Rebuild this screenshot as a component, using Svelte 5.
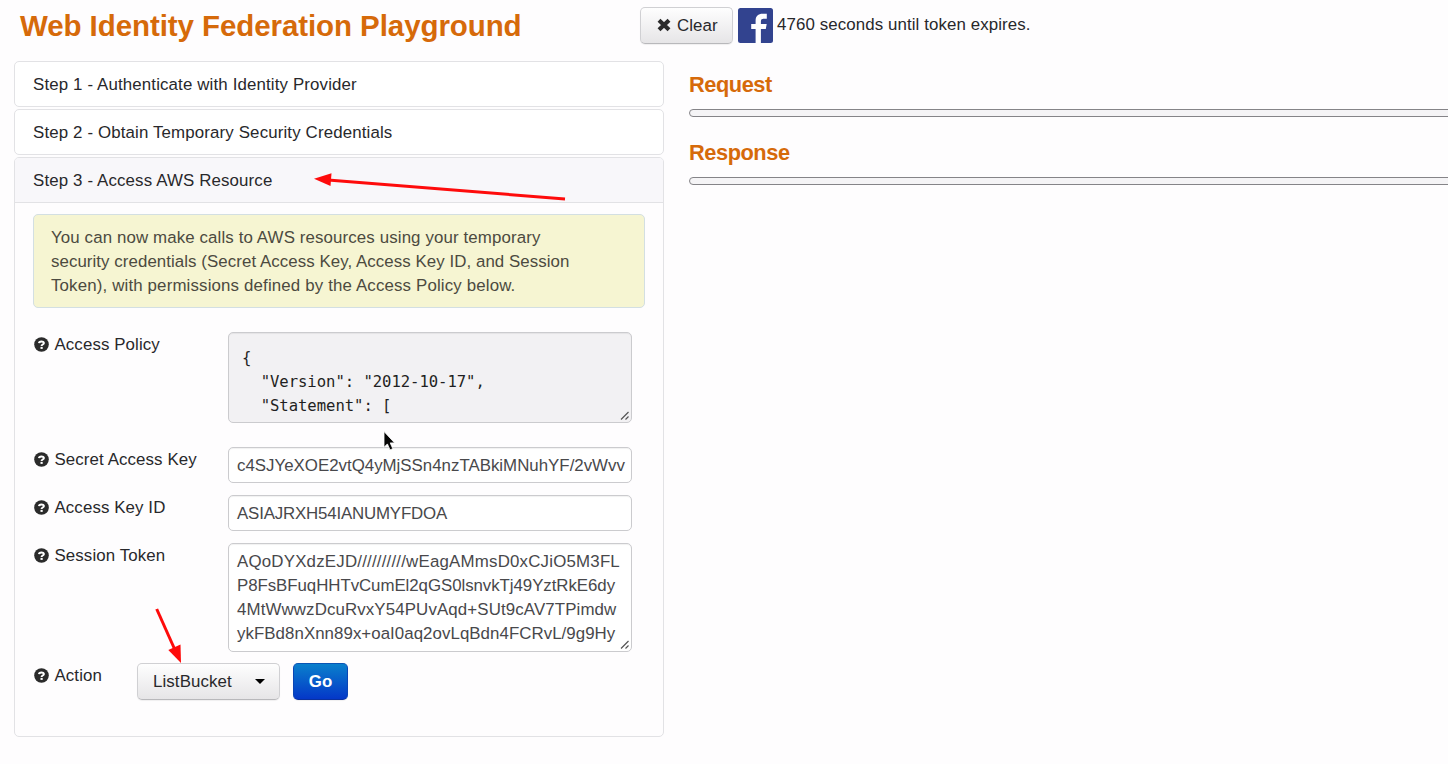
<script>
  const steps = [
    'Step 1 - Authenticate with Identity Provider',
    'Step 2 - Obtain Temporary Security Credentials'
  ];
  const notice = [
    { text: 'You can now make calls to AWS resources using your temporary', track: 0.12 },
    { text: 'security credentials (Secret Access Key, Access Key ID, and Session', track: 0.065 },
    { text: 'Token), with permissions defined by the Access Policy below.', track: 0.15 }
  ];
  const policy = '{\n  "Version": "2012-10-17",\n  "Statement": [';
  const token = [
    { text: 'AQoDYXdzEJD//////////wEagAMmsD0xCJiO5M3FL', track: 0.2 },
    { text: 'P8FsBFuqHHTvCumEl2qGS0lsnvkTj49YztRkE6dy', track: -0.06 },
    { text: '4MtWwwzDcuRvxY54PUvAqd+SUt9cAV7TPimdw', track: 0.12 },
    { text: 'ykFBd8nXnn89x+oaI0aq2ovLqBdn4FCRvL/9g9Hy', track: 0.05 }
  ];
</script>

{#snippet label(text)}
  <div class="label">
    <svg width="15" height="15" viewBox="0 0 15 15">
      <circle cx="7.5" cy="7.5" r="7.3" fill="#2b2b2b" />
      <path d="M5 6.1C5.1 3.9 9.9 3.8 9.9 6.1C9.9 7.6 7.6 7.4 7.6 8.9" fill="none" stroke="#fff" stroke-width="2" />
      <rect x="6.5" y="9.9" width="2.2" height="2" fill="#fff" />
    </svg>
    <span>{text}</span>
  </div>
{/snippet}

{#snippet lines(items)}
  {#each items as line}
    <div class="line" style="letter-spacing: {line.track}px">{line.text}</div>
  {/each}
{/snippet}

{#snippet grip()}
  <svg class="grip" width="10" height="10" viewBox="0 0 10 10">
    <path d="M1 8.5L8.5 1M5.5 8.5L8.5 5.5" stroke="#555" stroke-width="1.2" fill="none" />
  </svg>
{/snippet}

<div class="page">
  <header>
    <h1>Web Identity Federation Playground</h1>
    <button class="btn clear">
      <svg width="14" height="14" viewBox="0 0 14 14">
        <path d="M2 2.2L12 11.8M12 2.2L2 11.8" stroke="#2b2b2b" stroke-width="4.1" />
      </svg>
      <span>Clear</span>
    </button>
    <svg class="fb" width="35" height="35" viewBox="0 0 35 35">
      <rect width="35" height="35" rx="2.5" fill="#32438f" />
      <path d="M17.6 35V21.1H13.2V16H17.6V12.4C17.6 8 20.2 5.7 24.7 5.7H28.8V10.8H26C23.7 10.8 22.9 11.5 22.9 13.4V16H28.7L27.8 21.1H22.9V35Z" fill="#fff" />
    </svg>
    <span class="expiry">4760 seconds until token expires.</span>
  </header>

  <main>
    <section class="steps">
      {#each steps as step}
        <div class="group"><div class="heading">{step}</div></div>
      {/each}
      <div class="group open">
        <div class="heading">Step 3 - Access AWS Resource</div>
        <div class="body">
          <div class="alert">{@render lines(notice)}</div>
          <div class="row policy">
            {@render label('Access Policy')}
            <div class="field code">{policy}{@render grip()}</div>
          </div>
          <div class="row">
            {@render label('Secret Access Key')}
            <div class="field secret">c4SJYeXOE2vtQ4yMjSSn4nzTABkiMNuhYF/2vWvv</div>
          </div>
          <div class="row">
            {@render label('Access Key ID')}
            <div class="field key">ASIAJRXH54IANUMYFDOA</div>
          </div>
          <div class="row token">
            {@render label('Session Token')}
            <div class="field area">{@render lines(token)}{@render grip()}</div>
          </div>
          <div class="row action">
            {@render label('Action')}
            <button class="btn select">
              <span>ListBucket</span>
              <svg width="10" height="5" viewBox="0 0 10 5"><path d="M0 0H10L5 5Z" fill="#000" /></svg>
            </button>
            <button class="btn go"><span>Go</span></button>
          </div>
        </div>
      </div>
    </section>

    <section class="output">
      <h2>Request</h2>
      <div class="bar"></div>
      <h2>Response</h2>
      <div class="bar"></div>
    </section>
  </main>

  <svg class="overlay" width="1448" height="764" viewBox="0 0 1448 764">
    <g fill="#fe0b0b" stroke="#fe0b0b">
      <path d="M328 180L565 199" stroke-width="3" />
      <path d="M314 178.7L331.5 173.3L330.5 186Z" stroke="none" />
      <path d="M156.7 609L175 650" stroke-width="3" />
      <path d="M181 663L168.3 650L180.5 644.6Z" stroke="none" />
    </g>
    <path d="M384 431.5V447.3L387.4 443.9L390 449.9L392.8 448.7L390.2 442.9H394.6Z" fill="#050505" stroke="#fff" stroke-width=".8" />
  </svg>
</div>

<style>
  :global(body) { margin: 0; overflow: hidden; background: #fefdfe; }
  .page {
    position: relative;
    width: 1448px;
    height: 764px;
    overflow: hidden;
    box-sizing: border-box;
    font: 16.87px/24.1px "Liberation Sans", Arial, sans-serif;
    letter-spacing: .1px;
    color: #28282b;
  }
  .page * { box-sizing: border-box; }
  header { display: flex; align-items: flex-start; height: 61px; padding-left: 20px; }
  h1, h2 { margin: 0; color: #d66a0a; font-weight: bold; }
  h1 {
    flex: none;
    width: 620px;
    padding-top: 6px;
    font-size: 29.5px;
    line-height: 40px;
    letter-spacing: -.08px;
    white-space: nowrap;
  }
  .btn {
    display: flex;
    align-items: center;
    flex: none;
    font: inherit;
    letter-spacing: inherit;
    color: #28282b;
    height: 37px;
    padding: 0;
    border: 1px solid #d0d0d3;
    border-bottom-color: #b8b8bb;
    border-radius: 5px;
    background: linear-gradient(#fefefe, #e6e5e7);
    box-shadow: 0 1px 1px rgba(0, 0, 0, .06);
  }
  .btn span { padding-top: 2px; }
  .clear { width: 93px; margin-top: 7px; padding-left: 16px; gap: 6px; }
  .clear svg { margin-bottom: 1px; }
  .fb { flex: none; margin: 8px 0 0 5px; }
  .expiry { margin: 12px 0 0 4px; padding-top: .5px; }
  main { display: flex; padding-left: 14px; }
  .steps { flex: none; width: 650px; display: flex; flex-direction: column; gap: 2px; }
  .group { border: 1px solid #e2e2e5; border-radius: 5px; height: 46px; background: #fff; }
  .group.open { height: 580px; background: #fefdfe; }
  .heading { height: 45px; padding: 11px 18px; letter-spacing: .14px; }
  .open .heading { background: #f8f7fa; border-bottom: 1px solid #e2e2e5; border-radius: 4px 4px 0 0; }
  .body { padding: 11px 18px 0; }
  .alert {
    height: 94px;
    padding: 11px 17px;
    margin-bottom: 24px;
    border: 1px solid #d3dfe2;
    border-radius: 5px;
    background: #f6f5d2;
    color: #4c4a40;
    white-space: nowrap;
  }
  .row { display: flex; align-items: flex-start; height: 48px; }
  .policy { height: 115px; }
  .token { height: 120px; }
  .label { display: flex; align-items: center; gap: 5.5px; width: 195px; padding-left: 1px; white-space: nowrap; }
  .label svg { margin-bottom: 1px; }
  .label span { padding-top: 1px; }
  .field {
    position: relative;
    width: 404px;
    height: 36px;
    padding: 6px 7px 0 8px;
    border: 1px solid #cbcbce;
    border-radius: 5px;
    background: #fff;
    box-shadow: inset 0 1px 1px rgba(0, 0, 0, .06);
    color: #48484b;
    white-space: pre;
  }
  .secret { letter-spacing: 0; }
  .key { letter-spacing: -.18px; }
  .line { white-space: pre; }
  .code {
    height: 91px;
    padding: 13px 13px;
    background: #f2f1f3;
    color: #1f1f22;
    font-family: "DejaVu Sans Mono", "Liberation Mono", monospace;
    font-size: 15.6px;
    letter-spacing: -.05px;
  }
  .area { height: 109px; }
  .grip { position: absolute; right: 1px; bottom: 1px; }
  .action .label { width: 104px; }
  .select { width: 143px; padding: 0 14px 0 15px; justify-content: space-between; }
  .go {
    width: 55px;
    margin-left: 13px;
    justify-content: center;
    color: #fff;
    font-weight: bold;
    border-color: #0a55b5 #0a45b5 #0a309f;
    background: linear-gradient(#0a80cc, #0437c8);
  }
  .output { flex: none; width: 784px; padding: 12px 0 0 25px; }
  h2 { font-size: 21.8px; line-height: 24px; letter-spacing: -.45px; }
  .bar {
    width: 800px;
    height: 8px;
    margin: 12px 0 24px;
    border: 1.5px solid #858488;
    border-radius: 4px;
    background: #f5f4f6;
  }
  .overlay { position: absolute; left: 0; top: 0; pointer-events: none; }
</style>
